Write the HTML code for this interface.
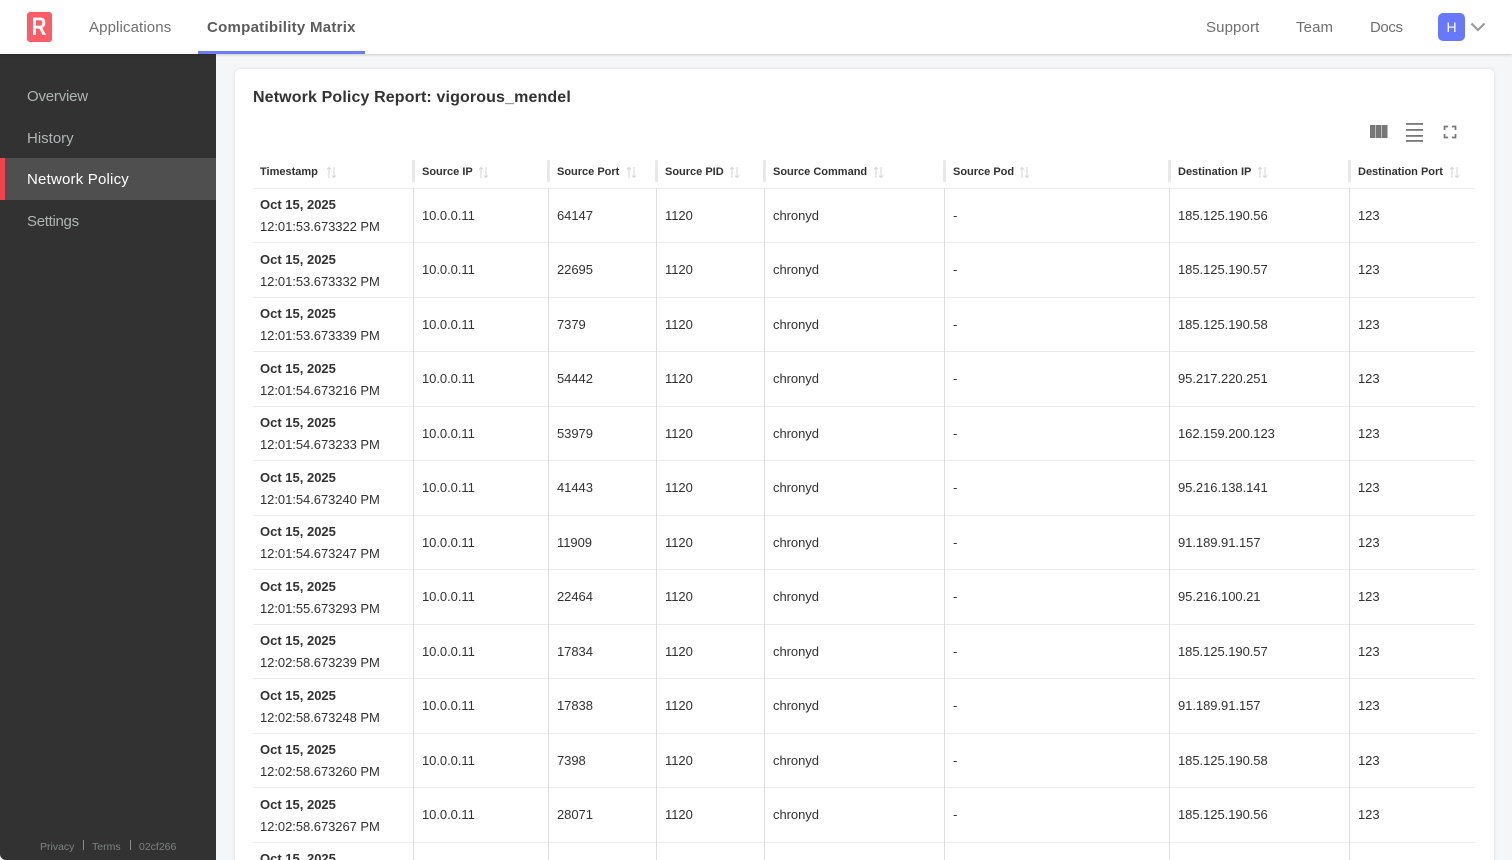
<!DOCTYPE html>
<html><head><meta charset="utf-8"><style>
*{box-sizing:border-box}
html,body{margin:0;width:1512px;height:860px;overflow:hidden;background:#f5f6f8;font-family:"Liberation Sans",sans-serif}
#w{position:absolute;left:0;top:0;width:1512px;height:860px;overflow:hidden;background:#f5f6f8}
.abs,.top a,.side a{position:absolute}
.top{position:absolute;left:0;top:0;width:1512px;height:54px;background:#fff;box-shadow:0 1px 3px rgba(0,0,0,.18);z-index:3}
.top a{top:18px;font-size:15px;line-height:20px;color:#6f6f6f;letter-spacing:.12px;white-space:nowrap}
.logo{position:absolute;left:27px;top:12px;width:25px;height:30px;border-radius:3px;background:#fb5c67;color:#fff;font-weight:bold;font-size:25px;line-height:30px;text-align:center}
.logo span{display:inline-block;transform:scaleX(.82)}
.tab{position:absolute;left:198px;top:51px;width:167px;height:3px;background:#6c7bf6}
.av{position:absolute;left:1438px;top:13px;width:27px;height:28px;border-radius:5px;background:#6878fb;color:#fff;font-size:14px;line-height:28px;text-align:center}
.side{position:absolute;left:0;top:54px;width:216px;height:806px;background:#323232;border-bottom-left-radius:6px;z-index:2}
.side a{left:27px;font-size:15px;line-height:20px;color:#b0b4b4;white-space:nowrap}
.act{position:absolute;left:0;top:104px;width:216px;height:42px;background:#4f4f4f;border-left:5px solid #f4434f}
.foot{position:absolute;top:786px;font-size:10.500px;line-height:14px;color:#7f8383;white-space:nowrap}
.fs{position:absolute;top:786px;width:1px;height:10px;background:#8a8a8a}
.card{position:absolute;left:235px;top:69px;width:1259px;height:820px;background:#fff;border-radius:5px;box-shadow:0 0 3px rgba(0,0,0,.12)}
h1{position:absolute;left:253px;top:87px;margin:0;font-size:16px;line-height:21px;color:#323232;white-space:nowrap;letter-spacing:.13px}
.th{position:absolute;top:166px;font-size:11px;line-height:13px;font-weight:bold;color:#323232;white-space:nowrap}
.gr{position:absolute;top:160px;width:3px;height:22px;background:#e8e8e8;border-radius:1px}
.so{position:absolute;top:166px}
.vl{position:absolute;top:188px;width:1px;height:672px;background:#dedede}
.row{position:absolute;left:253px;width:1222px;height:54.500px;border-bottom:1px solid #ececec;font-size:13px;color:#323232;letter-spacing:-.05px}
.row span{position:absolute;top:17px;line-height:19px;white-space:nowrap}
.row b{position:absolute;left:7px;top:6.500px;line-height:20px;font-size:13px;white-space:nowrap;color:#323232;letter-spacing:0}
.row i{font-style:normal;position:absolute;left:7px;top:28.500px;line-height:20px;white-space:nowrap}
.c1{left:169px}.c2{left:304px}.c3{left:412px}.c4{left:520px}.c5{left:700px}.c6{left:925px}.c7{left:1105px}
</style></head><body><div id="w">
<div class="top">
<div class="logo"><span>R</span></div>
<a style="left:89px">Applications</a>
<a style="left:207px;font-weight:bold;color:#5b5b5b;letter-spacing:.27px">Compatibility Matrix</a>
<div class="tab"></div>
<a style="left:1206px">Support</a><a style="left:1296px">Team</a><a style="left:1370px;letter-spacing:-.4px">Docs</a>
<div class="av">H</div>
<svg class="abs" style="left:1470px;top:21px" width="16" height="12" viewBox="0 0 16 12"><path d="M1.500 2.500L8 9L14.500 2.500" fill="none" stroke="#9a9a9a" stroke-width="2.200"/></svg>
</div>
<div class="side">
<a style="top:33px;letter-spacing:-.2px">Overview</a><a style="top:75px">History</a>
<div class="act"></div>
<a style="top:116px;color:#fff;letter-spacing:.2px">Network Policy</a><a style="top:158px;letter-spacing:-.3px">Settings</a>
<div class="foot" style="left:40px">Privacy</div><div class="fs" style="left:83px"></div>
<div class="foot" style="left:92px">Terms</div><div class="fs" style="left:130px"></div>
<div class="foot" style="left:139px">02cf266</div>
</div>
<div class="card"></div>
<h1>Network Policy Report: vigorous_mendel</h1>
<svg class="abs" style="left:1370px;top:122px" width="90" height="20" viewBox="0 0 90 20"><g fill="#777"><rect x="0" y="3" width="5.500" height="13"/><rect x="6" y="3" width="5.500" height="13"/><rect x="12" y="3" width="5.500" height="13"/><rect x="36" y="1" width="17" height="1.800"/><rect x="36" y="7" width="17" height="1.800"/><rect x="36" y="13" width="17" height="1.800"/><rect x="36" y="18" width="17" height="1.800"/></g><path d="M74.500 8V4.500H78M82 4.500H85.500V8M85.500 12V15.500H82M78 15.500H74.500V12" fill="none" stroke="#777" stroke-width="1.700"/></svg>
<div class="th" style="left:260px">Timestamp</div><div class="th" style="left:422px">Source IP</div><div class="th" style="left:557px">Source Port</div><div class="th" style="left:665px">Source PID</div><div class="th" style="left:773px">Source Command</div><div class="th" style="left:953px">Source Pod</div><div class="th" style="left:1178px">Destination IP</div><div class="th" style="left:1358px">Destination Port</div>
<svg class="so" style="left:326px" width="11" height="13" viewBox="0 0 11 13"><path d="M3 12V1.500M1 3.500L3 1.500L5 3.500M8 1V11.500M6 9.500L8 11.500L10 9.500" fill="none" stroke="#d6d6d6" stroke-width="1"/></svg>
<svg class="so" style="left:478px" width="11" height="13" viewBox="0 0 11 13"><path d="M3 12V1.500M1 3.500L3 1.500L5 3.500M8 1V11.500M6 9.500L8 11.500L10 9.500" fill="none" stroke="#d6d6d6" stroke-width="1"/></svg>
<svg class="so" style="left:626px" width="11" height="13" viewBox="0 0 11 13"><path d="M3 12V1.500M1 3.500L3 1.500L5 3.500M8 1V11.500M6 9.500L8 11.500L10 9.500" fill="none" stroke="#d6d6d6" stroke-width="1"/></svg>
<svg class="so" style="left:729px" width="11" height="13" viewBox="0 0 11 13"><path d="M3 12V1.500M1 3.500L3 1.500L5 3.500M8 1V11.500M6 9.500L8 11.500L10 9.500" fill="none" stroke="#d6d6d6" stroke-width="1"/></svg>
<svg class="so" style="left:873px" width="11" height="13" viewBox="0 0 11 13"><path d="M3 12V1.500M1 3.500L3 1.500L5 3.500M8 1V11.500M6 9.500L8 11.500L10 9.500" fill="none" stroke="#d6d6d6" stroke-width="1"/></svg>
<svg class="so" style="left:1019px" width="11" height="13" viewBox="0 0 11 13"><path d="M3 12V1.500M1 3.500L3 1.500L5 3.500M8 1V11.500M6 9.500L8 11.500L10 9.500" fill="none" stroke="#d6d6d6" stroke-width="1"/></svg>
<svg class="so" style="left:1257px" width="11" height="13" viewBox="0 0 11 13"><path d="M3 12V1.500M1 3.500L3 1.500L5 3.500M8 1V11.500M6 9.500L8 11.500L10 9.500" fill="none" stroke="#d6d6d6" stroke-width="1"/></svg>
<svg class="so" style="left:1449px" width="11" height="13" viewBox="0 0 11 13"><path d="M3 12V1.500M1 3.500L3 1.500L5 3.500M8 1V11.500M6 9.500L8 11.500L10 9.500" fill="none" stroke="#d6d6d6" stroke-width="1"/></svg>
<div class="gr" style="left:412px"></div><div class="gr" style="left:547px"></div><div class="gr" style="left:655px"></div><div class="gr" style="left:763px"></div><div class="gr" style="left:943px"></div><div class="gr" style="left:1168px"></div><div class="gr" style="left:1348px"></div>
<div class="abs" style="left:253px;top:188px;width:1222px;height:1px;background:#ececec"></div>

<div class="row" style="top:188.500px"><b>Oct 15, 2025</b><i>12:01:53.673322 PM</i><span class="c1">10.0.0.11</span><span class="c2">64147</span><span class="c3">1120</span><span class="c4">chronyd</span><span class="c5">-</span><span class="c6">185.125.190.56</span><span class="c7">123</span></div>
<div class="row" style="top:243px"><b>Oct 15, 2025</b><i>12:01:53.673332 PM</i><span class="c1">10.0.0.11</span><span class="c2">22695</span><span class="c3">1120</span><span class="c4">chronyd</span><span class="c5">-</span><span class="c6">185.125.190.57</span><span class="c7">123</span></div>
<div class="row" style="top:297.500px"><b>Oct 15, 2025</b><i>12:01:53.673339 PM</i><span class="c1">10.0.0.11</span><span class="c2">7379</span><span class="c3">1120</span><span class="c4">chronyd</span><span class="c5">-</span><span class="c6">185.125.190.58</span><span class="c7">123</span></div>
<div class="row" style="top:352px"><b>Oct 15, 2025</b><i>12:01:54.673216 PM</i><span class="c1">10.0.0.11</span><span class="c2">54442</span><span class="c3">1120</span><span class="c4">chronyd</span><span class="c5">-</span><span class="c6">95.217.220.251</span><span class="c7">123</span></div>
<div class="row" style="top:406.500px"><b>Oct 15, 2025</b><i>12:01:54.673233 PM</i><span class="c1">10.0.0.11</span><span class="c2">53979</span><span class="c3">1120</span><span class="c4">chronyd</span><span class="c5">-</span><span class="c6">162.159.200.123</span><span class="c7">123</span></div>
<div class="row" style="top:461px"><b>Oct 15, 2025</b><i>12:01:54.673240 PM</i><span class="c1">10.0.0.11</span><span class="c2">41443</span><span class="c3">1120</span><span class="c4">chronyd</span><span class="c5">-</span><span class="c6">95.216.138.141</span><span class="c7">123</span></div>
<div class="row" style="top:515.500px"><b>Oct 15, 2025</b><i>12:01:54.673247 PM</i><span class="c1">10.0.0.11</span><span class="c2">11909</span><span class="c3">1120</span><span class="c4">chronyd</span><span class="c5">-</span><span class="c6">91.189.91.157</span><span class="c7">123</span></div>
<div class="row" style="top:570px"><b>Oct 15, 2025</b><i>12:01:55.673293 PM</i><span class="c1">10.0.0.11</span><span class="c2">22464</span><span class="c3">1120</span><span class="c4">chronyd</span><span class="c5">-</span><span class="c6">95.216.100.21</span><span class="c7">123</span></div>
<div class="row" style="top:624.500px"><b>Oct 15, 2025</b><i>12:02:58.673239 PM</i><span class="c1">10.0.0.11</span><span class="c2">17834</span><span class="c3">1120</span><span class="c4">chronyd</span><span class="c5">-</span><span class="c6">185.125.190.57</span><span class="c7">123</span></div>
<div class="row" style="top:679px"><b>Oct 15, 2025</b><i>12:02:58.673248 PM</i><span class="c1">10.0.0.11</span><span class="c2">17838</span><span class="c3">1120</span><span class="c4">chronyd</span><span class="c5">-</span><span class="c6">91.189.91.157</span><span class="c7">123</span></div>
<div class="row" style="top:733.500px"><b>Oct 15, 2025</b><i>12:02:58.673260 PM</i><span class="c1">10.0.0.11</span><span class="c2">7398</span><span class="c3">1120</span><span class="c4">chronyd</span><span class="c5">-</span><span class="c6">185.125.190.58</span><span class="c7">123</span></div>
<div class="row" style="top:788px"><b>Oct 15, 2025</b><i>12:02:58.673267 PM</i><span class="c1">10.0.0.11</span><span class="c2">28071</span><span class="c3">1120</span><span class="c4">chronyd</span><span class="c5">-</span><span class="c6">185.125.190.56</span><span class="c7">123</span></div>
<div class="row" style="top:842.500px;border:0"><b>Oct 15, 2025</b></div>
<div class="vl" style="left:413px"></div><div class="vl" style="left:548px"></div><div class="vl" style="left:656px"></div><div class="vl" style="left:764px"></div><div class="vl" style="left:944px"></div><div class="vl" style="left:1169px"></div><div class="vl" style="left:1349px"></div>
</div></body></html>
